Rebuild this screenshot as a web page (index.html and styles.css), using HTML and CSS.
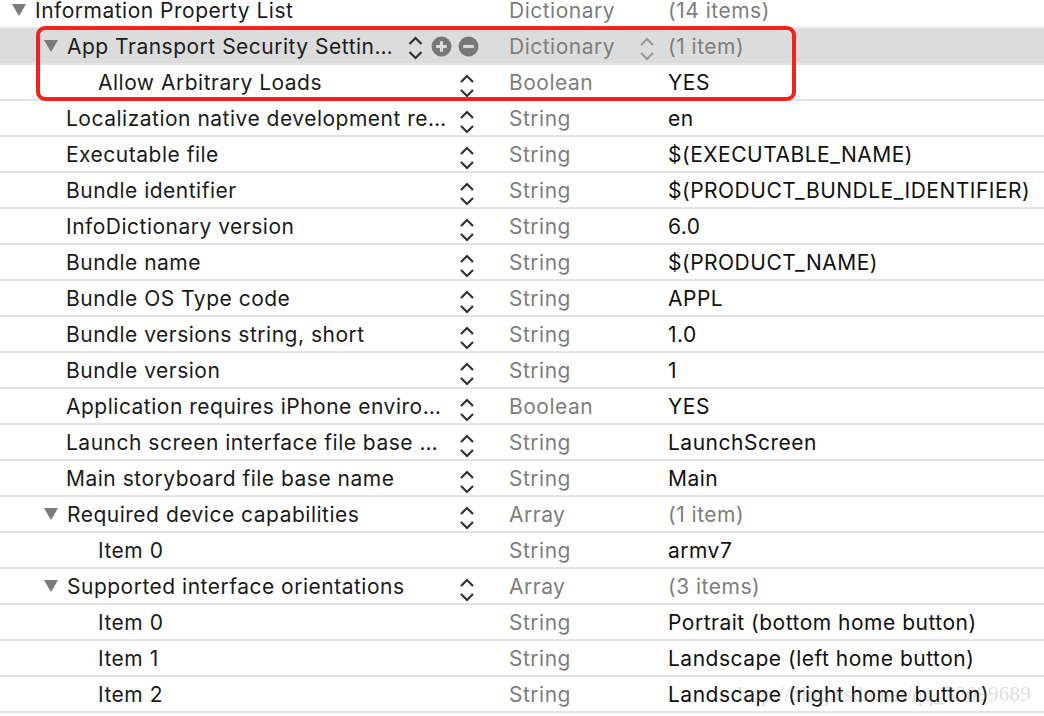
FILE: index.html
```html
<!DOCTYPE html>
<html>
<head>
<meta charset="utf-8">
<link rel="stylesheet" href="styles.css">
</head>
<body>
<div class="plist">
  <div class="row">
    <div class="key l0"><span class="tri"></span><span class="name">Information Property List</span></div>
    <div class="ctl"></div>
    <div class="type">Dictionary</div>
    <div class="val dim">(14 items)</div>
  </div>
  <div class="row sel">
    <div class="key l1 short"><span class="tri"></span><span class="name">App Transport Security Settings</span></div>
    <div class="ctl wide">
      <svg class="step big" viewBox="0 0 16 24"><path d="M2 8 L8 2 L14 8 M2 16 L8 22 L14 16"/></svg>
      <svg class="btn" viewBox="0 0 20 20"><circle cx="10" cy="10" r="9.5"/><path d="M5 10 H15 M10 5 V15"/></svg>
      <svg class="btn" viewBox="0 0 20 20"><circle cx="10" cy="10" r="9.5"/><path d="M5 10 H15"/></svg>
    </div>
    <div class="type">Dictionary<svg class="step light" viewBox="0 0 16 24"><path d="M2 8 L8 2 L14 8 M2 16 L8 22 L14 16"/></svg></div>
    <div class="val dim">(1 item)</div>
  </div>
  <div class="row">
    <div class="key l2"><span class="name">Allow Arbitrary Loads</span></div>
    <div class="ctl"><svg class="step" viewBox="0 0 16 24"><path d="M2 8 L8 2 L14 8 M2 16 L8 22 L14 16"/></svg></div>
    <div class="type">Boolean</div>
    <div class="val">YES</div>
  </div>
  <div class="row">
    <div class="key l1"><span class="name">Localization native development region</span></div>
    <div class="ctl"><svg class="step" viewBox="0 0 16 24"><path d="M2 8 L8 2 L14 8 M2 16 L8 22 L14 16"/></svg></div>
    <div class="type">String</div>
    <div class="val">en</div>
  </div>
  <div class="row">
    <div class="key l1"><span class="name">Executable file</span></div>
    <div class="ctl"><svg class="step" viewBox="0 0 16 24"><path d="M2 8 L8 2 L14 8 M2 16 L8 22 L14 16"/></svg></div>
    <div class="type">String</div>
    <div class="val">$(EXECUTABLE_NAME)</div>
  </div>
  <div class="row">
    <div class="key l1"><span class="name">Bundle identifier</span></div>
    <div class="ctl"><svg class="step" viewBox="0 0 16 24"><path d="M2 8 L8 2 L14 8 M2 16 L8 22 L14 16"/></svg></div>
    <div class="type">String</div>
    <div class="val">$(PRODUCT_BUNDLE_IDENTIFIER)</div>
  </div>
  <div class="row">
    <div class="key l1"><span class="name">InfoDictionary version</span></div>
    <div class="ctl"><svg class="step" viewBox="0 0 16 24"><path d="M2 8 L8 2 L14 8 M2 16 L8 22 L14 16"/></svg></div>
    <div class="type">String</div>
    <div class="val">6.0</div>
  </div>
  <div class="row">
    <div class="key l1"><span class="name">Bundle name</span></div>
    <div class="ctl"><svg class="step" viewBox="0 0 16 24"><path d="M2 8 L8 2 L14 8 M2 16 L8 22 L14 16"/></svg></div>
    <div class="type">String</div>
    <div class="val">$(PRODUCT_NAME)</div>
  </div>
  <div class="row">
    <div class="key l1"><span class="name">Bundle OS Type code</span></div>
    <div class="ctl"><svg class="step" viewBox="0 0 16 24"><path d="M2 8 L8 2 L14 8 M2 16 L8 22 L14 16"/></svg></div>
    <div class="type">String</div>
    <div class="val">APPL</div>
  </div>
  <div class="row">
    <div class="key l1"><span class="name">Bundle versions string, short</span></div>
    <div class="ctl"><svg class="step" viewBox="0 0 16 24"><path d="M2 8 L8 2 L14 8 M2 16 L8 22 L14 16"/></svg></div>
    <div class="type">String</div>
    <div class="val">1.0</div>
  </div>
  <div class="row">
    <div class="key l1"><span class="name">Bundle version</span></div>
    <div class="ctl"><svg class="step" viewBox="0 0 16 24"><path d="M2 8 L8 2 L14 8 M2 16 L8 22 L14 16"/></svg></div>
    <div class="type">String</div>
    <div class="val">1</div>
  </div>
  <div class="row">
    <div class="key l1"><span class="name">Application requires iPhone environment</span></div>
    <div class="ctl"><svg class="step" viewBox="0 0 16 24"><path d="M2 8 L8 2 L14 8 M2 16 L8 22 L14 16"/></svg></div>
    <div class="type">Boolean</div>
    <div class="val">YES</div>
  </div>
  <div class="row">
    <div class="key l1"><span class="name">Launch screen interface file base name</span></div>
    <div class="ctl"><svg class="step" viewBox="0 0 16 24"><path d="M2 8 L8 2 L14 8 M2 16 L8 22 L14 16"/></svg></div>
    <div class="type">String</div>
    <div class="val">LaunchScreen</div>
  </div>
  <div class="row">
    <div class="key l1"><span class="name">Main storyboard file base name</span></div>
    <div class="ctl"><svg class="step" viewBox="0 0 16 24"><path d="M2 8 L8 2 L14 8 M2 16 L8 22 L14 16"/></svg></div>
    <div class="type">String</div>
    <div class="val">Main</div>
  </div>
  <div class="row">
    <div class="key l1"><span class="tri"></span><span class="name">Required device capabilities</span></div>
    <div class="ctl"><svg class="step" viewBox="0 0 16 24"><path d="M2 8 L8 2 L14 8 M2 16 L8 22 L14 16"/></svg></div>
    <div class="type">Array</div>
    <div class="val dim">(1 item)</div>
  </div>
  <div class="row">
    <div class="key l2"><span class="name">Item 0</span></div>
    <div class="ctl"></div>
    <div class="type">String</div>
    <div class="val">armv7</div>
  </div>
  <div class="row">
    <div class="key l1"><span class="tri"></span><span class="name">Supported interface orientations</span></div>
    <div class="ctl"><svg class="step" viewBox="0 0 16 24"><path d="M2 8 L8 2 L14 8 M2 16 L8 22 L14 16"/></svg></div>
    <div class="type">Array</div>
    <div class="val dim">(3 items)</div>
  </div>
  <div class="row">
    <div class="key l2"><span class="name">Item 0</span></div>
    <div class="ctl"></div>
    <div class="type">String</div>
    <div class="val">Portrait (bottom home button)</div>
  </div>
  <div class="row">
    <div class="key l2"><span class="name">Item 1</span></div>
    <div class="ctl"></div>
    <div class="type">String</div>
    <div class="val">Landscape (left home button)</div>
  </div>
  <div class="row">
    <div class="key l2"><span class="name">Item 2</span></div>
    <div class="ctl"></div>
    <div class="type">String</div>
    <div class="val">Landscape (right home button)</div>
  </div>
  <div class="highlight"></div>
  <div class="watermark">http://blog.csdn.net/qq_32099689</div>
</div>
</body>
</html>
```
FILE: styles.css
```css
html, body {
  margin: 0;
  padding: 0;
  background: #ffffff;
  overflow: hidden;
}
body {
  font-family: Inter, "Noto Sans", "Liberation Sans", sans-serif;
  font-size: 21px;
  letter-spacing: 0.5px;
  color: #1b1b1b;
}
.plist {
  position: relative;
  margin-top: -7px;
}
.row {
  display: flex;
  align-items: center;
  height: 34px;
  border-bottom: 2px solid #e4e4e4;
  white-space: nowrap;
}
.row.sel {
  background: #dcdcdc;
}
.key {
  flex: 0 0 449px;
  display: flex;
  align-items: center;
  box-sizing: border-box;
  overflow: hidden;
}
.key.short {
  flex-basis: 396px;
}
.key.l0 { padding-left: 12px; }
.key.l1 { padding-left: 44px; }
.key.l2 { padding-left: 98px; }
.key.l1 .name, .key.l0 .name { margin-left: 9px; }
.key:not(:has(.tri)).l1 .name { margin-left: 22px; }
.name {
  flex: 0 1 auto;
  overflow: hidden;
  text-overflow: ellipsis;
  min-width: 0;
}
.tri {
  flex: 0 0 auto;
  width: 0;
  height: 0;
  border-left: 7px solid transparent;
  border-right: 7px solid transparent;
  border-top: 12px solid #7b7b7b;
}
.ctl {
  flex: 0 0 60px;
  display: flex;
  align-items: center;
  box-sizing: border-box;
  padding-left: 10px;
  height: 34px;
}
.ctl.wide {
  flex-basis: 113px;
  padding-left: 11px;
  gap: 6px;
}
.step {
  width: 16px;
  height: 24px;
  margin-top: 8px;
  fill: none;
  stroke: #333333;
  stroke-width: 2.2;
}
.step.big {
  width: 17px;
  margin-top: 4px;
  margin-right: 1px;
}
.step.light {
  stroke: #9a9a9a;
  margin-left: auto;
  margin-right: 13px;
  margin-top: 6px;
}
.btn {
  width: 21px;
  height: 21px;
}
.btn circle { fill: #777777; }
.btn path { stroke: #dcdcdc; stroke-width: 3; }
.type {
  flex: 0 0 159px;
  display: flex;
  align-items: center;
  color: #7e7e7e;
}
.val {
  flex: 1 1 auto;
  color: #111111;
}
.val.dim { color: #7e7e7e; }
.highlight {
  position: absolute;
  left: 36px;
  top: 33px;
  width: 752px;
  height: 67px;
  border: 4px solid #f2231d;
  border-radius: 9px;
}
.watermark {
  position: absolute;
  left: 738px;
  top: 689px;
  font-family: "Liberation Serif", serif;
  font-size: 21px;
  letter-spacing: 0.3px;
  color: rgba(120, 120, 120, 0.25);
  white-space: nowrap;
}
```
